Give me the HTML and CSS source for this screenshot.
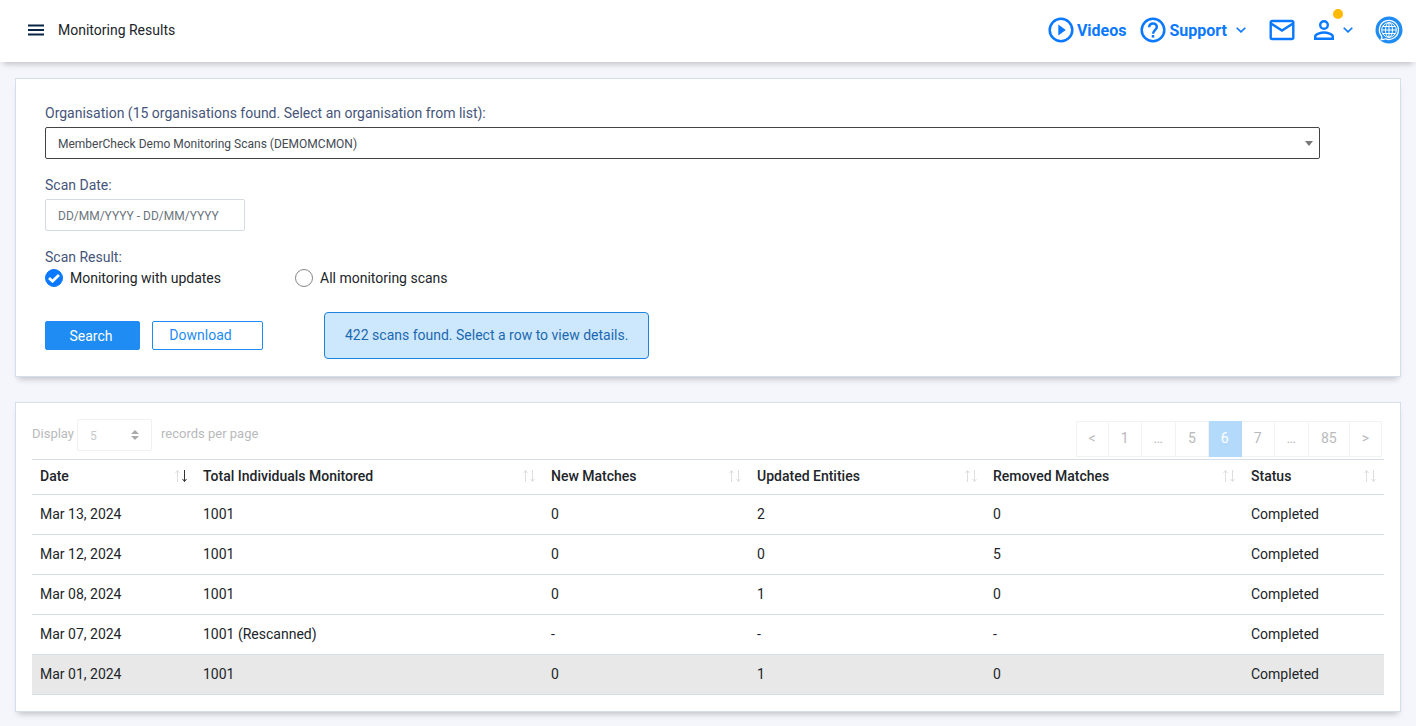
FILE: index.html
```html
<!DOCTYPE html>
<html lang="en">
<head>
    <meta charset="UTF-8">
    <meta name="viewport" content="width=device-width, initial-scale=1.0">
    <title>Monitoring Results</title>
    <link rel="stylesheet" href="styles.css">
</head>
<body>
    <!-- Top bar -->
    <header class="topbar">
        <button type="button" class="menu-btn" aria-label="Menu">
            <svg width="16" height="12" viewBox="0 0 16 12"><path d="M0 1.5h16M0 6h16M0 10.5h16" stroke="#0b2545" stroke-width="2"/></svg>
        </button>
        <h1>Monitoring Results</h1>
        <nav class="topnav">
            <a href="#" class="nav-link videos">
                <svg width="26" height="26" viewBox="0 0 26 26"><circle cx="13" cy="13" r="11.3" fill="none" stroke="#0a78ff" stroke-width="2.5"/><path d="M10.3 7.5v11l7.5-5.5z" fill="#0a78ff"/></svg>
                <span>Videos</span>
            </a>
            <a href="#" class="nav-link support">
                <svg width="26" height="26" viewBox="0 0 26 26" fill="none" stroke="#0a78ff" stroke-width="2.5"><circle cx="13" cy="13" r="11.3"/><path d="M9.2 10.2c0-2.2 1.6-3.8 3.8-3.8s3.8 1.6 3.8 3.7c0 2.9-3.8 3.2-3.8 6.6"/><path d="M13 18v2.6"/></svg>
                <span>Support</span>
                <svg class="chevron" width="10" height="6" viewBox="0 0 10 6"><path d="M0.7 0.7L5 4.9l4.3-4.2" fill="none" stroke="#0a78ff" stroke-width="1.6"/></svg>
            </a>
            <a href="#" class="nav-link mail" aria-label="Messages">
                <svg width="26" height="22" viewBox="0 0 26 22" fill="none" stroke="#0a78ff" stroke-width="2.4"><rect x="1.7" y="2" width="22.6" height="18" rx="1.5"/><path d="M2 4.5l11 7 11-7"/></svg>
            </a>
            <a href="#" class="nav-link user" aria-label="Account">
                <svg width="20" height="20" viewBox="0 0 20 20" fill="none" stroke="#0a78ff" stroke-width="2.4"><circle cx="10" cy="5" r="3.8"/><path d="M1.2 18.8v-2.3c0-2.500 5.800-4 8.800-4s8.800 1.500 8.800 4v2.300z"/></svg>
                <span class="dot"></span>
                <svg class="chevron" width="10" height="6" viewBox="0 0 10 6"><path d="M0.7 0.7L5 4.9l4.3-4.2" fill="none" stroke="#0a78ff" stroke-width="1.6"/></svg>
            </a>
            <a href="#" class="nav-link globe" aria-label="Language">
                <svg width="28" height="28" viewBox="0 0 28 28"><circle cx="14" cy="14" r="13.5" fill="#1e8cf3"/><g fill="none" stroke="#fff"><path stroke-width="1.3" d="M6.6 20A9.500 9.500 0 1 1 10.500 22.800C9.200 23.600 7.800 23.700 6.200 23.300 7 22.300 7.100 21.200 6.600 20z"/><circle cx="14" cy="14" r="7.300"/><ellipse cx="14" cy="14" rx="3.500" ry="7.300"/><path d="M14 6.700v14.600M6.700 14h14.600M8 10.500h12M8 17.500h12"/></g></svg>
            </a>
        </nav>
    </header>

    <main>
        <!-- Search form -->
        <form class="panel search-panel">
            <div class="field">
                <label for="organisation">Organisation (15 organisations found. Select an organisation from list):</label>
                <select id="organisation" class="org-select">
                    <option>MemberCheck Demo Monitoring Scans (DEMOMCMON)</option>
                </select>
            </div>
            <div class="field">
                <label for="scanDate">Scan Date:</label>
                <input type="text" id="scanDate" class="date-input" placeholder="DD/MM/YYYY - DD/MM/YYYY">
            </div>
            <fieldset class="field">
                <legend>Scan Result:</legend>
                <div class="radios">
                    <label class="radio"><input type="radio" name="scanResult" checked>Monitoring with updates</label>
                    <label class="radio"><input type="radio" name="scanResult">All monitoring scans</label>
                </div>
            </fieldset>
            <div class="actions">
                <button type="button" class="btn btn-primary">Search</button>
                <button type="button" class="btn btn-outline">Download</button>
                <p class="info">422 scans found. Select a row to view details.</p>
            </div>
        </form>

        <!-- Results -->
        <section class="panel results-panel">
            <div class="toolbar">
                <div class="page-size">
                    <label for="pageSize">Display</label>
                    <select id="pageSize"><option>5</option></select>
                    <span>records per page</span>
                </div>
                <nav class="pagination" aria-label="Pages">
                    <a href="#">&lt;</a>
                    <a href="#">1</a>
                    <a href="#">…</a>
                    <a href="#">5</a>
                    <a href="#" class="active">6</a>
                    <a href="#">7</a>
                    <a href="#">…</a>
                    <a href="#">85</a>
                    <a href="#">&gt;</a>
                </nav>
            </div>
            <table>
                <colgroup>
                    <col class="col-date"><col class="col-total"><col class="col-new"><col class="col-updated"><col class="col-removed"><col class="col-status">
                </colgroup>
                <thead>
                    <tr>
                        <th class="desc"><div>Date <svg class="sort" width="14" height="14" viewBox="0 0 14 14"><path class="up" d="M3.5 13V1.5M1.5 4l2-2.5 2 2.5"/><path class="down" d="M10.5 1v11.5M8.5 10l2 2.5 2-2.5"/></svg></div></th>
                        <th><div>Total Individuals Monitored <svg class="sort" width="14" height="14" viewBox="0 0 14 14"><path class="up" d="M3.5 13V1.5M1.5 4l2-2.5 2 2.5"/><path class="down" d="M10.5 1v11.5M8.5 10l2 2.5 2-2.5"/></svg></div></th>
                        <th><div>New Matches <svg class="sort" width="14" height="14" viewBox="0 0 14 14"><path class="up" d="M3.5 13V1.5M1.5 4l2-2.5 2 2.5"/><path class="down" d="M10.5 1v11.5M8.5 10l2 2.5 2-2.5"/></svg></div></th>
                        <th><div>Updated Entities <svg class="sort" width="14" height="14" viewBox="0 0 14 14"><path class="up" d="M3.5 13V1.5M1.5 4l2-2.5 2 2.5"/><path class="down" d="M10.5 1v11.5M8.5 10l2 2.5 2-2.5"/></svg></div></th>
                        <th><div>Removed Matches <svg class="sort" width="14" height="14" viewBox="0 0 14 14"><path class="up" d="M3.5 13V1.5M1.5 4l2-2.5 2 2.5"/><path class="down" d="M10.5 1v11.5M8.5 10l2 2.5 2-2.5"/></svg></div></th>
                        <th><div>Status <svg class="sort" width="14" height="14" viewBox="0 0 14 14"><path class="up" d="M3.5 13V1.5M1.5 4l2-2.5 2 2.5"/><path class="down" d="M10.5 1v11.5M8.5 10l2 2.5 2-2.5"/></svg></div></th>
                    </tr>
                </thead>
                <tbody>
                    <tr><td>Mar 13, 2024</td><td>1001</td><td>0</td><td>2</td><td>0</td><td>Completed</td></tr>
                    <tr><td>Mar 12, 2024</td><td>1001</td><td>0</td><td>0</td><td>5</td><td>Completed</td></tr>
                    <tr><td>Mar 08, 2024</td><td>1001</td><td>0</td><td>1</td><td>0</td><td>Completed</td></tr>
                    <tr><td>Mar 07, 2024</td><td>1001 (Rescanned)</td><td>-</td><td>-</td><td>-</td><td>Completed</td></tr>
                    <tr class="selected"><td>Mar 01, 2024</td><td>1001</td><td>0</td><td>1</td><td>0</td><td>Completed</td></tr>
                </tbody>
            </table>
        </section>
    </main>
</body>
</html>
```

FILE: styles.css
```css
* {
    margin: 0;
    padding: 0;
    box-sizing: border-box;
}

body {
    background: #f4f6fc;
    color: #212529;
    font-family: Roboto, "Liberation Sans", sans-serif;
    font-size: 14px;
    line-height: 21px;
}

button, input, select {
    font: inherit;
}

svg {
    display: block;
    flex: none;
}

/* Top bar */
.topbar {
    display: flex;
    align-items: center;
    height: 62px;
    padding: 0 13px 2px 28px;
    background: #fff;
    box-shadow: 0 5px 6px -3px rgba(0, 0, 0, 0.22);
}

.menu-btn {
    border: none;
    background: none;
    margin-right: 14px;
    cursor: pointer;
}

h1 {
    font-size: 14px;
    font-weight: 400;
}

.topnav {
    display: flex;
    align-items: center;
    margin-left: auto;
}

.nav-link {
    display: flex;
    align-items: center;
    gap: 3px;
    position: relative;
    color: #0a78ff;
    font-size: 16px;
    font-weight: 700;
    text-decoration: none;
}

.support {
    margin-left: 14px;
}

.mail {
    margin-left: 23px;
}

.user {
    margin-left: 19px;
}

.globe {
    margin-left: 22px;
}

.chevron {
    margin-left: 6px;
}

.dot {
    position: absolute;
    top: -11px;
    left: 19px;
    width: 10px;
    height: 10px;
    border-radius: 50%;
    background: #ffb900;
}

main {
    display: flex;
    flex-direction: column;
    gap: 25px;
    padding: 16px 15px 14px;
}

.panel {
    background: #fff;
    border: 1px solid #d5dfe9;
    box-shadow: 0 5px 6px -3px rgba(0, 0, 0, 0.22);
}

/* Search form */
.search-panel {
    padding: 24px 80px 17px 29px;
}

.field {
    border: none;
    margin-bottom: 16px;
    color: #46557a;
}

.field > label, legend {
    display: block;
}

.org-select, .date-input {
    display: block;
    height: 32px;
    margin-top: 3px;
    padding: 2px 12px 0;
    border-radius: 2px;
    font-size: 12px;
    appearance: none;
}

.org-select {
    width: 100%;
    border: 1px solid #444;
    color: #444a52;
    background: #fff url("data:image/svg+xml,%3Csvg xmlns='http://www.w3.org/2000/svg' width='8' height='5'%3E%3Cpath d='M0 0h8L4 5z' fill='%23777'/%3E%3C/svg%3E") no-repeat right 6px center;
}

.date-input {
    width: 200px;
    border: 1px solid #d5dbe0;
}

.date-input::placeholder {
    color: #6c757d;
}

.radios {
    display: flex;
}

.radio {
    display: flex;
    align-items: center;
    width: 250px;
    color: #212529;
}

.radio input {
    width: 18px;
    height: 18px;
    margin: 0 7px 2px 0;
    border: 1px solid #888;
    border-radius: 50%;
    appearance: none;
}

.radio input:checked {
    border-color: #0a78ff;
    background: #0a78ff url("data:image/svg+xml,%3Csvg xmlns='http://www.w3.org/2000/svg' width='12' height='10'%3E%3Cpath d='M1 5l3.5 3.2L11 2' fill='none' stroke='white' stroke-width='2.8'/%3E%3C/svg%3E") no-repeat center;
}

.actions {
    display: flex;
    align-items: center;
    margin-top: 23px;
}

.btn {
    height: 29px;
    border: 1px solid #1e8cf3;
    border-radius: 2px;
    cursor: pointer;
}

.btn-primary {
    width: 95px;
    padding: 2px 3px 0 0;
    margin-right: 12px;
    background: #1e8cf3;
    color: #fff;
}

.btn-outline {
    width: 111px;
    padding-right: 14px;
    margin-right: 61px;
    background: #fff;
    color: #1e8cf3;
}

.info {
    padding: 12px 20px;
    border: 1px solid #1e82dc;
    border-radius: 4px;
    background: #cde8fd;
    color: #1c68b0;
}

/* Results */
.results-panel {
    padding: 16px;
}

.toolbar {
    display: flex;
    justify-content: space-between;
    padding-right: 2px;
    color: #b8babc;
}

.page-size {
    display: flex;
    height: 32px;
    font-size: 13px;
    line-height: 29px;
}

.page-size select {
    width: 75px;
    height: 32px;
    margin: 0 9px 0 3px;
    padding: 2px 12px 0;
    border: 1px solid #f0f1f2;
    border-radius: 2px;
    color: #c8cacc;
    font-size: 12px;
    appearance: none;
    background: #fff url("data:image/svg+xml,%3Csvg xmlns='http://www.w3.org/2000/svg' width='8' height='10'%3E%3Cpath d='M0 4h8L4 0zM0 6h8l-4 4z' fill='%23aaa'/%3E%3C/svg%3E") no-repeat right 12px center;
}

.pagination {
    display: flex;
    margin: 2px 0;
}

.pagination a {
    height: 36px;
    padding: 6px 12px 0;
    border: 1px solid #f1f2f4;
    border-left: none;
    color: #b8babc;
    text-decoration: none;
}

.pagination a:first-child {
    border-left: 1px solid #f1f2f4;
}

.pagination .active {
    border-color: #b4dafb;
    background: #b4dafb;
    color: #fff;
}

table {
    width: 100%;
    table-layout: fixed;
    border-collapse: collapse;
}

/* Column widths share out the table in proportion */
.col-date { width: 163px; }
.col-total { width: 348px; }
.col-new { width: 206px; }
.col-updated { width: 236px; }
.col-removed { width: 258px; }
.col-status { width: 141px; }

th, td {
    padding: 0 8px;
    border-top: 1px solid #d8dbe8;
    border-bottom: 1px solid #d8dbe8;
    text-align: left;
}

th {
    height: 35px;
    padding: 0 7px 2px 8px;
    font-weight: 500;
}

th div {
    display: flex;
    align-items: center;
    justify-content: space-between;
}

td {
    height: 40px;
}

.sort {
    fill: none;
    stroke: #dedede;
}

.desc .down {
    stroke: #333;
}

.selected {
    background: #e8e8e8;
}
```
